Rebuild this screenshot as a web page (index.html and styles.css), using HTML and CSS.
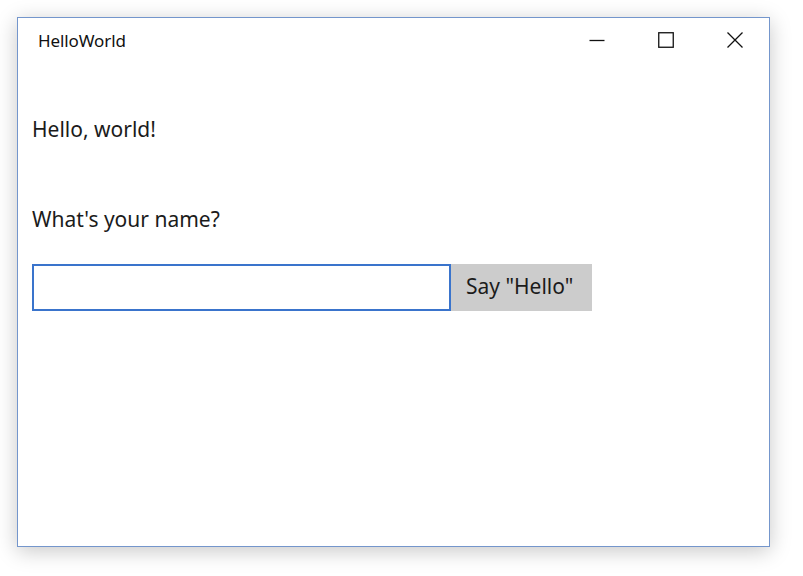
FILE: index.html
```html
<!DOCTYPE html>
<html>
<head>
<meta charset="utf-8">
<link rel="stylesheet" href="styles.css">
</head>
<body>
<div class="window">
  <div class="titlebar">
    <span class="title">HelloWorld</span>
    <div class="caption">
      <div class="cbtn"><svg width="16" height="16" viewBox="0 0 16 16"><path d="M0.5 8.5H15.5" stroke="#111" stroke-width="1.3" fill="none"/></svg></div>
      <div class="cbtn"><svg width="16" height="16" viewBox="0 0 16 16"><rect x="0.75" y="0.75" width="14.5" height="14.5" stroke="#111" stroke-width="1.3" fill="none"/></svg></div>
      <div class="cbtn"><svg width="16" height="16" viewBox="0 0 16 16"><path d="M0.5 0.5L15.5 15.5M15.5 0.5L0.5 15.5" stroke="#111" stroke-width="1.3" fill="none"/></svg></div>
    </div>
  </div>
  <div class="content">
    <div class="line hello">Hello, world!</div>
    <div class="line ask">What's your name?</div>
    <div class="row">
      <input class="name" type="text">
      <button class="say">Say "Hello"</button>
    </div>
  </div>
</div>
</body>
</html>
```
FILE: styles.css
```css
html, body {
  margin: 0;
  padding: 0;
  background: #ffffff;
}
html {
  height: 576px;
}
body {
  box-sizing: border-box;
  height: 576px;
  padding: 17px 0 0 17px;
  font-family: "Noto Sans", "Open Sans", sans-serif;
  color: #1b1b1b;
}
.window {
  box-sizing: border-box;
  width: 753px;
  height: 530px;
  border: 1px solid #7496cc;
  background: #fff;
  box-shadow: 0 4px 20px rgba(0, 0, 0, 0.22);
  display: flex;
  flex-direction: column;
}
.titlebar {
  height: 47px;
  display: flex;
  align-items: center;
  justify-content: space-between;
}
.title {
  padding-left: 20px;
  font-size: 17px;
  line-height: 20px;
  margin-top: -1px;
  letter-spacing: -0.1px;
  color: #111;
}
.caption {
  display: flex;
  height: 100%;
}
.cbtn {
  width: 69px;
  height: 100%;
  display: flex;
  align-items: center;
  justify-content: center;
}
.cbtn svg {
  display: block;
  margin-top: -4px;
}
.content {
  padding: 50px 0 0 14px;
}
.line {
  font-size: 21px;
  line-height: 28px;
}
.ask {
  margin-top: 62px;
}
.row {
  margin-top: 31px;
  display: flex;
}
.name {
  box-sizing: border-box;
  width: 419px;
  height: 47px;
  margin: 0;
  border: 2px solid #3a74cc;
  outline: none;
  background: #fff;
  padding: 0 8px;
  font-family: inherit;
  font-size: 21px;
}
.say {
  box-sizing: border-box;
  width: 141px;
  height: 47px;
  margin: 0;
  border: none;
  background: #cccccc;
  color: #1b1b1b;
  font-family: inherit;
  font-size: 21px;
  text-align: left;
  padding: 0 0 3px 15px;
}
```
